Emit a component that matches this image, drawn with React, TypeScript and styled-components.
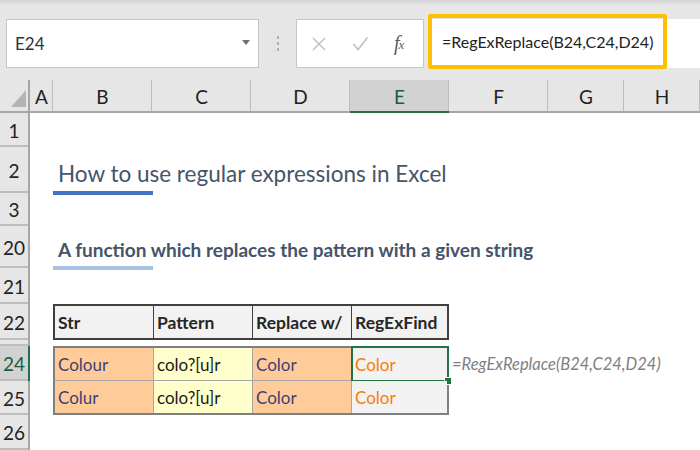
import React from "react"
import styled, { createGlobalStyle, css } from "styled-components"

const font = `Lato, "Liberation Sans", sans-serif`
const green = "#217346"

const GlobalStyle = createGlobalStyle`
  html, body {
    margin: 0;
    padding: 0;
    background: #ffffff;
    overflow: hidden;
  }
  body {
    font-family: ${ font };
  }
`

const columns = [
  { key: "A", width: 23 },
  { key: "B", width: 99 },
  { key: "C", width: 99 },
  { key: "D", width: 99 },
  { key: "E", width: 99 },
  { key: "F", width: 99 },
  { key: "G", width: 76 },
  { key: "H", width: 76 },
]

const rows = [
  { label: "1", height: 34 },
  { label: "2", height: 46 },
  { label: "3", height: 33 },
  { label: "20", height: 42 },
  { label: "21", height: 36 },
  { label: "22", height: 36 },
  { label: "", height: 6 },
  { label: "24", height: 35 },
  { label: "25", height: 34 },
  { label: "26", height: 35 },
]

const headings = ["Str", "Pattern", "Replace w/", "RegExFind"]

const data = [
  { str: "Colour", pattern: "colo?[u]r", replace: "Color", result: "Color" },
  { str: "Colur", pattern: "colo?[u]r", replace: "Color", result: "Color" },
]

const App = () => {
  return (
    <>
      <GlobalStyle />
      <StyledWindow>
        <StyledRibbonEdge />
        <StyledFormulaBar>
          <StyledNameBox>
            <span>E24</span>
            <StyledCaret />
          </StyledNameBox>
          <StyledGrip>
            <i /><i /><i />
          </StyledGrip>
          <StyledButtons>
            <svg width="14" height="14" viewBox="0 0 14 14">
              <path d="M1 1 L13 13 M13 1 L1 13" stroke="#c4c4c4" strokeWidth="1.6" fill="none" />
            </svg>
            <svg width="17" height="15" viewBox="0 0 17 15">
              <path d="M1.5 8 L6 13.5 L15.5 1.5" stroke="#c4c4c4" strokeWidth="1.8" fill="none" />
            </svg>
            <StyledFx>f<sub>x</sub></StyledFx>
          </StyledButtons>
          <StyledFormulaField>
            <StyledHighlight>=RegExReplace(B24,C24,D24)</StyledHighlight>
          </StyledFormulaField>
        </StyledFormulaBar>

        <StyledSheet>
          <StyledCorner>
            <svg width="15" height="17" viewBox="0 0 15 17">
              <path d="M15 0 L15 17 L0 17 Z" fill="#b4b4b4" />
            </svg>
          </StyledCorner>
          {
            columns.map(({ key }) => (
              <StyledColHead key={ key } $selected={ key === "E" }>{ key }</StyledColHead>
            ))
          }

          {
            rows.map(({ label }, i) => (
              <StyledRowHead key={ `r${ i }` } $row={ i + 2 } $selected={ label === "24" }>
                { label }
              </StyledRowHead>
            ))
          }

          <StyledTitleCell $row={ 3 } $accent="#4472c4" $lift={ 8 }>
            <StyledTitle>How to use regular expressions in Excel</StyledTitle>
          </StyledTitleCell>

          <StyledTitleCell $row={ 5 } $accent="#a9bfe3" $lift={ 9 }>
            <StyledSubtitle>A function which replaces the pattern with a given string</StyledSubtitle>
          </StyledTitleCell>

          <StyledTableRow $row={ 7 } $variant="head">
            {
              headings.map(h => (
                <StyledHeadCell key={ h }>{ h }</StyledHeadCell>
              ))
            }
          </StyledTableRow>

          {
            data.map((d, i) => (
              <StyledTableRow key={ d.str } $row={ 9 + i } $variant={ i === 0 ? "first" : "last" }>
                <StyledDataCell $fill="#ffcc99" $color="#3f3f76">{ d.str }</StyledDataCell>
                <StyledDataCell $fill="#ffffcc" $color="#1a1a1a">{ d.pattern }</StyledDataCell>
                <StyledDataCell $fill="#ffcc99" $color="#3f3f76">{ d.replace }</StyledDataCell>
                <StyledDataCell $fill="#f2f2f2" $color="#fa7d00">
                  { d.result }
                  { i === 0 && <StyledSelection><StyledHandle /></StyledSelection> }
                </StyledDataCell>
              </StyledTableRow>
            ))
          }

          <StyledNote $row={ 9 }>=RegExReplace(B24,C24,D24)</StyledNote>
        </StyledSheet>
      </StyledWindow>
    </>
  )
}

const StyledWindow = styled("div")`
  width: 700px;
  height: 450px;
  overflow: hidden;
  background: #ffffff;
`

const StyledRibbonEdge = styled("div")`
  height: 6px;
  background: linear-gradient(#d4d4d4, #e6e6e6);
`

const StyledFormulaBar = styled("div")`
  height: 74px;
  box-sizing: border-box;
  padding: 13px 0 12px 6px;
  background: #e6e6e6;
  display: flex;
  align-items: stretch;
`

const StyledNameBox = styled("div")`
  width: 253px;
  box-sizing: border-box;
  background: #ffffff;
  border: 1px solid #c6c6c6;
  display: flex;
  align-items: center;
  justify-content: space-between;
  padding: 0 8px 0 8px;
  font-size: 17px;
  color: #333333;
`

const StyledCaret = styled("span")`
  width: 0;
  height: 0;
  border-left: 4px solid transparent;
  border-right: 4px solid transparent;
  border-top: 5px solid #707070;
  margin-top: -2px;
`

const StyledGrip = styled("div")`
  width: 37px;
  display: flex;
  flex-direction: column;
  align-items: center;
  justify-content: center;
  gap: 3px;

  i {
    width: 2px;
    height: 3px;
    background: #b0b0b0;
  }
`

const StyledButtons = styled("div")`
  width: 128px;
  box-sizing: border-box;
  background: #ffffff;
  border: 1px solid #c6c6c6;
  display: flex;
  align-items: center;
  gap: 26px;
  padding: 0 0 0 15px;
`

const StyledFx = styled("span")`
  font-family: "Liberation Serif", "DejaVu Serif", serif;
  font-style: italic;
  font-size: 20px;
  color: #5e5e5e;
  letter-spacing: -1px;
  margin-left: -1px;

  sub {
    font-size: 13px;
    vertical-align: 1px;
  }
`

const StyledFormulaField = styled("div")`
  flex: 1;
  margin-left: 4px;
  background: #ffffff;
  display: flex;
  align-items: stretch;
`

const StyledHighlight = styled("div")`
  width: 239px;
  box-sizing: border-box;
  margin: -5px 0 -1px 0;
  border: 4px solid #ffc000;
  border-radius: 2px;
  padding: 0 0 0 10px;
  display: flex;
  align-items: center;
  white-space: nowrap;
  font-size: 16px;
  color: #222222;
`

const StyledSheet = styled("div")`
  display: grid;
  grid-template-columns: 30px ${ columns.map(c => `${ c.width }px`).join(" ") };
  grid-template-rows: 33px ${ rows.map(r => `${ r.height }px`).join(" ") };
`

const StyledCorner = styled("div")`
  background: #e6e6e6;
  border-right: 2px solid #a6a6a6;
  border-bottom: 2px solid #a6a6a6;
  display: flex;
  align-items: flex-end;
  justify-content: flex-end;
  padding: 0 2px 4px 0;
`

const StyledColHead = styled("div")<{ $selected?: boolean }>`
  background: ${ p => p.$selected ? "#d2d2d2" : "#e6e6e6" };
  border-bottom: 2px solid ${ p => p.$selected ? green : "#a6a6a6" };
  box-shadow: inset -1px 0 0 #bdbdbd;
  display: flex;
  align-items: center;
  justify-content: center;
  padding-top: 1px;
  font-size: 19px;
  color: ${ p => p.$selected ? "#1d5c3a" : "#222222" };
`

const StyledRowHead = styled("div")<{ $row: number, $selected?: boolean }>`
  grid-column: 1;
  grid-row: ${ p => p.$row };
  background: ${ p => p.$selected ? "#d2d2d2" : "#e6e6e6" };
  border-right: 2px solid ${ p => p.$selected ? green : "#a6a6a6" };
  box-shadow: inset 0 -2px 0 #bdbdbd;
  display: flex;
  align-items: center;
  justify-content: center;
  font-size: 19px;
  color: ${ p => p.$selected ? "#1d5c3a" : "#222222" };
  overflow: hidden;
`

const StyledTitleCell = styled("div")<{ $row: number, $accent: string, $lift: number }>`
  grid-column: 3 / -1;
  grid-row: ${ p => p.$row };
  position: relative;
  display: flex;
  align-items: flex-end;
  padding: 0 0 ${ p => p.$lift }px 5px;
  white-space: nowrap;
  color: #44546a;

  &::after {
    content: "";
    position: absolute;
    left: 0;
    bottom: -2px;
    width: 100px;
    height: 4px;
    background: ${ p => p.$accent };
  }
`

const StyledTitle = styled("span")`
  font-size: 22.5px;
  line-height: 1;
`

const StyledSubtitle = styled("span")`
  font-size: 19px;
  font-weight: bold;
  line-height: 1;
`

const rowBorders = {
  head: css`
    border: 2px solid #404040;
    background: #f2f2f2;
  `,
  first: css`
    border: 2px solid #7f7f7f;
    border-bottom: 1px solid #a6a6a6;
  `,
  last: css`
    border: 2px solid #7f7f7f;
    border-top: 0;
  `,
}

const StyledTableRow = styled("div")<{ $row: number, $variant: keyof typeof rowBorders }>`
  grid-column: 3 / 7;
  grid-row: ${ p => p.$row };
  display: grid;
  grid-template-columns: 98px 99px 99px 1fr;
  ${ p => rowBorders[p.$variant] }
`

const StyledHeadCell = styled("div")`
  display: flex;
  align-items: center;
  padding-left: 3px;
  white-space: nowrap;
  overflow: hidden;
  font-size: 17.5px;
  font-weight: bold;
  color: #262626;

  & + & {
    border-left: 1px solid #404040;
  }
`

const StyledDataCell = styled("div")<{ $fill: string, $color: string }>`
  position: relative;
  display: flex;
  align-items: center;
  padding-left: 3px;
  white-space: nowrap;
  font-size: 17px;
  background: ${ p => p.$fill };
  color: ${ p => p.$color };

  & + & {
    border-left: 1px solid #a6a6a6;
  }
`

const StyledSelection = styled("div")`
  position: absolute;
  inset: -2px -2px -2px -1px;
  border: 2px solid ${ green };
`

const StyledHandle = styled("div")`
  position: absolute;
  right: -5px;
  bottom: -5px;
  width: 6px;
  height: 6px;
  background: ${ green };
  border: 1px solid #ffffff;
`

const StyledNote = styled("div")<{ $row: number }>`
  grid-column: 7 / -1;
  grid-row: ${ p => p.$row };
  display: flex;
  align-items: center;
  padding-left: 3px;
  white-space: nowrap;
  font-size: 16.5px;
  font-style: italic;
  color: #808080;
`

export default App
